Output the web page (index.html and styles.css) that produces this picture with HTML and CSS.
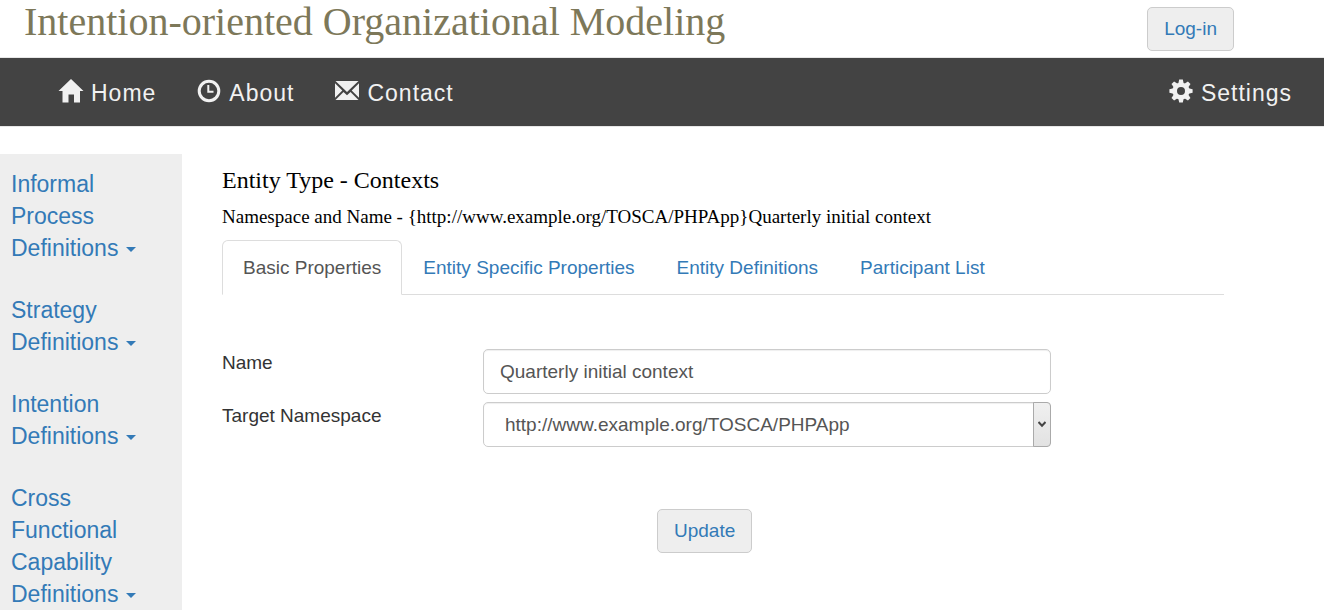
FILE: index.html
```html
<!DOCTYPE html>
<html lang="en">
<head>
<meta charset="utf-8">
<meta name="viewport" content="width=device-width, initial-scale=1">
<title>Intention-oriented Organizational Modeling</title>
<link rel="stylesheet" href="styles.css">
</head>
<body>
<header class="masthead">
  <h1 class="masthead-title">Intention-oriented Organizational Modeling</h1>
  <button class="button" type="button">Log-in</button>
</header>
<nav class="navbar">
  <a class="nav-link" href="#home">
    <svg class="nav-icon" viewBox="0 0 24 24" aria-hidden="true"><path d="M12 0 L24.5 12 H21 V23.500 H15 V15.500 H9.500 V23.500 H3.500 V12 H-.5 Z"/></svg>
    Home
  </a>
  <a class="nav-link" href="#about">
    <svg class="nav-icon" viewBox="0 0 24 24" aria-hidden="true"><circle cx="12" cy="12" r="9.800" fill="none" stroke="currentColor" stroke-width="3"/><path d="M10.300 6 H12.300 V11.700 H16.500 V13.800 H10.300 Z"/></svg>
    About
  </a>
  <a class="nav-link" href="#contact">
    <svg class="nav-icon" viewBox="0 0 24 24" aria-hidden="true"><path d="M.5 2 H23.500 L12 13 Z M0 4.200 L7.300 11.400 L0 18.700 Z M24 4.200 L16.700 11.400 L24 18.700 Z M8.500 13 L12 16.300 L15.500 13 L23.500 21 H.5 Z"/></svg>
    Contact
  </a>
  <a class="nav-link nav-link-end" href="#settings">
    <svg class="nav-icon" viewBox="0 0 24 24" aria-hidden="true"><circle cx="12" cy="12" r="6.300" fill="none" stroke="currentColor" stroke-width="4.600"/><g id="teeth"><path id="tooth" d="M9.300 4.500 L10.200 .4 H13.800 L14.700 4.500 Z"/><use href="#tooth" transform="rotate(45 12 12)"/><use href="#tooth" transform="rotate(90 12 12)"/><use href="#tooth" transform="rotate(135 12 12)"/></g><use href="#teeth" transform="rotate(180 12 12)"/></svg>
    Settings
  </a>
</nav>
<div class="page">
  <aside class="sidebar">
    <a class="side-link" href="#informal">Informal Process Definitions <span class="caret"></span></a>
    <a class="side-link" href="#strategy">Strategy Definitions <span class="caret"></span></a>
    <a class="side-link" href="#intention">Intention Definitions <span class="caret"></span></a>
    <a class="side-link" href="#capability">Cross Functional Capability Definitions <span class="caret"></span></a>
  </aside>
  <main class="content">
    <h2 class="entity-type">Entity Type - Contexts</h2>
    <p class="entity-name">Namespace and Name - {http://www.example.org/TOSCA/PHPApp}Quarterly initial context</p>
    <nav class="tabs">
      <a class="tab tab-active" href="#basic">Basic Properties</a>
      <a class="tab" href="#specific">Entity Specific Properties</a>
      <a class="tab" href="#definitions">Entity Definitions</a>
      <a class="tab" href="#participants">Participant List</a>
    </nav>
    <form class="form">
      <label class="label" for="name">Name</label>
      <input class="field" id="name" type="text" value="Quarterly initial context">
      <label class="label" for="namespace">Target Namespace</label>
      <div class="select-wrap">
        <select class="field select" id="namespace"><option>http://www.example.org/TOSCA/PHPApp</option></select>
        <span class="select-arrow"><svg viewBox="0 0 8 7" width="8" height="7" aria-hidden="true"><path d="M.5 1 L4 4.800 L7.500 1" fill="none" stroke="#444" stroke-width="2"/></svg></span>
      </div>
      <div class="actions"><button class="button" type="button">Update</button></div>
    </form>
  </main>
</div>
</body>
</html>
```
FILE: styles.css
```css
* {
  box-sizing: border-box;
}

body {
  margin: 0;
  background: #fff;
  color: #333;
  font-family: "Liberation Sans", Arial, sans-serif;
  font-size: 19px;
}

a {
  text-decoration: none;
}

.masthead {
  display: flex;
  justify-content: space-between;
  align-items: flex-start;
  height: 57px;
  padding: 0 90px 0 24px;
}

.masthead-title {
  margin: 0;
  color: #7d7859;
  font: 400 40px/44px "Liberation Serif", "Times New Roman", serif;
}

.button {
  height: 44px;
  padding: 0 16px;
  border: 1px solid #ccc;
  border-radius: 5px;
  background: #eee;
  color: #337ab7;
  font: inherit;
}

.masthead .button {
  margin-top: 7px;
}

.navbar {
  display: flex;
  align-items: center;
  gap: 41px;
  height: 70px;
  padding: 2px 32px 0 59px;
  border: solid #e7e7e7;
  border-width: 1px 0;
  background: #434343;
}

.nav-link {
  display: flex;
  align-items: center;
  gap: 8px;
  color: #f1f1f1;
  font-size: 23px;
  letter-spacing: 1px;
}

.nav-link-end {
  margin-left: auto;
}

.nav-icon {
  width: 24px;
  height: 24px;
  margin-bottom: 4px;
  fill: currentColor;
  overflow: visible;
}

.page {
  display: flex;
  margin-top: 27px;
}

.sidebar {
  display: flex;
  flex: none;
  flex-direction: column;
  gap: 30px;
  width: 182px;
  padding: 14px 40px 0 11px;
  background: #eee;
}

.side-link {
  color: #337ab7;
  font-size: 23px;
  line-height: 32px;
}

.caret {
  display: inline-block;
  margin-left: 1px;
  border: solid transparent;
  border-width: 5px 5px 0;
  border-top-color: #337ab7;
  vertical-align: middle;
}

.content {
  flex: 1;
  padding: 12px 100px 0 40px;
}

.entity-type {
  margin: 0 0 11px;
  color: #000;
  font: 400 24px/28px "Liberation Serif", "Times New Roman", serif;
}

.entity-name {
  margin: 0 0 11px;
  color: #000;
  font: 400 19px/24px "Liberation Serif", "Times New Roman", serif;
}

.tabs {
  display: flex;
  border-bottom: 1px solid #ddd;
}

.tab {
  margin-bottom: -1px;
  padding: 14px 20px;
  border: 1px solid transparent;
  border-radius: 6px 6px 0 0;
  color: #337ab7;
  line-height: 25px;
}

.tab-active {
  border-color: #ddd;
  border-bottom-color: #fff;
  background: #fff;
  color: #555;
}

.form {
  display: grid;
  grid-template-columns: 261fr 568fr 173fr;
  row-gap: 8px;
  margin-top: 54px;
}

.label {
  grid-column: 1;
  line-height: 28px;
}

.field {
  width: 100%;
  height: 45px;
  padding: 0 16px;
  border: 1px solid #ccc;
  border-radius: 5px;
  background: #fff;
  box-shadow: inset 0 1px 1px #0001;
  color: #555;
  font: inherit;
}

.select-wrap {
  position: relative;
}

.select {
  appearance: none;
  padding-left: 21px;
}

.select-arrow {
  position: absolute;
  top: 0;
  right: 0;
  bottom: 0;
  display: flex;
  align-items: center;
  justify-content: center;
  width: 18px;
  border: 1px solid #aaa;
  border-radius: 0 4px 4px 0;
  background: linear-gradient(#f0f0f0, #e2e2e2);
  pointer-events: none;
}

.actions {
  grid-column: 2;
  margin-top: 54px;
  padding-left: 174px;
}
```
